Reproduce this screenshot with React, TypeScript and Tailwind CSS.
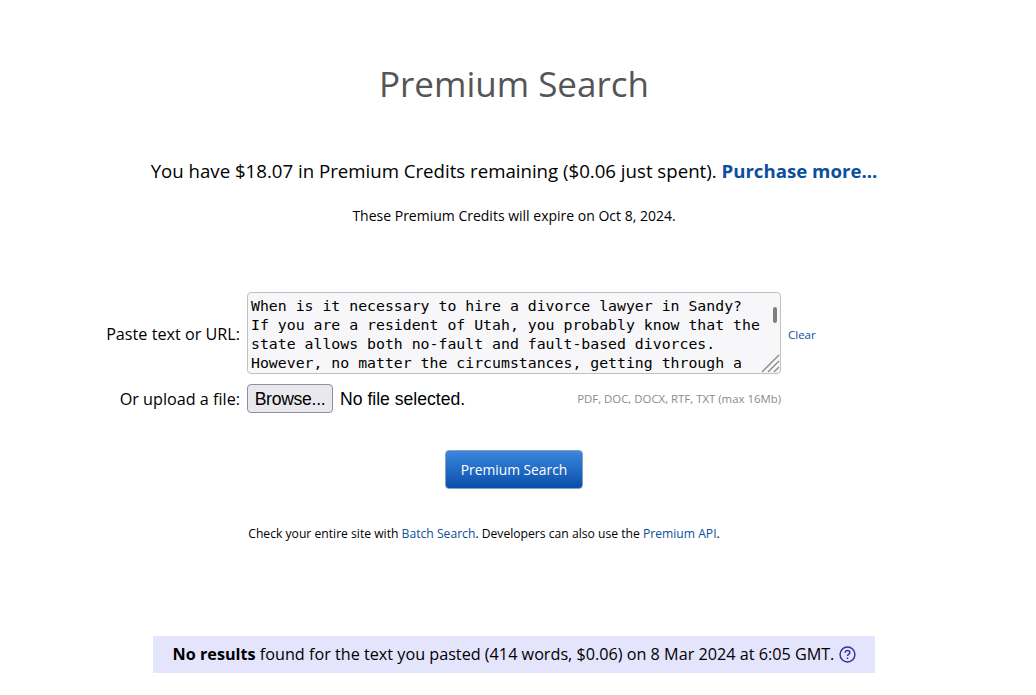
const sans = "font-['Open_Sans',sans-serif]";

const App = () => {
  return (
    <div className={`w-[1028px] h-[695px] overflow-hidden bg-white text-black ${sans}`}>
      <h1 className="pt-[60px] text-center text-[35px] leading-[48px] text-[#555555]">Premium Search</h1>

      <p className="mt-[50px] text-center text-[18.65px] leading-[25px]">
        You have $18.07 in Premium Credits remaining ($0.06 just spent).{" "}
        <a className="font-bold text-[#0b4f9e]">Purchase more...</a>
      </p>
      <p className="mt-[23px] text-center text-[14px] leading-[20px]">These Premium Credits will expire on Oct 8, 2024.</p>

      <div className="mt-[66px] flex items-center">
        <label className="w-[240px] pt-[1px] text-right text-[16.2px] leading-[22px]">Paste text or URL:</label>
        <div className="relative ml-[7px] h-[82px] w-[534px]">
          <textarea
            readOnly
            className="h-full w-full resize-none overflow-hidden rounded-[4px] border border-[#c0c0c0] bg-[#f7f7f9] pl-[3px] pr-[20px] pt-[3px] font-['DejaVu_Sans_Mono',monospace] text-[14.83px] leading-[19px] outline-none"
            defaultValue="When is it necessary to hire a divorce lawyer in Sandy?&#10;If you are a resident of Utah, you probably know that the state allows both no-fault and fault-based divorces.&#10;However, no matter the circumstances, getting through a divorce can be difficult."
          />
          <div className="absolute right-[4px] top-[15px] h-[16px] w-[4px] rounded-full bg-[#7f7f7f]" />
          <svg className="absolute bottom-[1px] right-[1px]" width="20" height="20" viewBox="0 0 20 20" stroke="#8a8a8a" strokeWidth="1.4" fill="none">
            <path d="M2 19 19 2M8 19 19 8M14 19l5-5" />
          </svg>
        </div>
        <a className="ml-[7px] pt-[3px] text-[11.5px] leading-[14px] text-[#0b4f9e]">Clear</a>
      </div>

      <div className="mt-[10px] flex h-[29px] w-[781px] items-center">
        <label className="w-[240px] text-right text-[16.2px] leading-[22px]">Or upload a file:</label>
        <button className="ml-[7px] h-[29px] w-[86px] rounded-[4px] border border-[#8f8f9d] bg-[#e9e9ed] font-['Liberation_Sans',sans-serif] text-[17.6px] leading-[20px] tracking-[-0.3px]">
          Browse...
        </button>
        <span className="ml-[7px] font-['Liberation_Sans',sans-serif] text-[17.6px] leading-[20px]">No file selected.</span>
        <span className="ml-auto text-[11.4px] leading-[14px] text-[#8a8a8a]">PDF, DOC, DOCX, RTF, TXT (max 16Mb)</span>
      </div>

      <div className="mt-[37px] flex justify-center">
        <button className="h-[39px] w-[138px] rounded-[4px] border border-[#8aa0b8] bg-gradient-to-b from-[#3b86e0] to-[#0450a8] pt-[2px] text-[13.8px] text-white">
          Premium Search
        </button>
      </div>

      <p className="mt-[36px] pr-[60px] text-center text-[12.15px] leading-[17px]">
        Check your entire site with <a className="text-[#0b4f9e]">Batch Search</a>. Developers can also use the{" "}
        <a className="text-[#0b4f9e]">Premium API</a>.
      </p>

      <div className="mt-[94px] flex justify-center">
        <div className="flex h-[37px] w-[722px] items-center justify-center bg-[#e4e4fd] pl-[1px] text-[16.2px]">
          <span>
            <b>No results</b> found for the text you pasted (414 words, $0.06) on 8 Mar 2024 at 6:05 GMT.
          </span>
          <svg className="ml-[5px]" width="17" height="17" viewBox="0 0 16 16" fill="none" stroke="#33339a" strokeWidth="1.4">
            <circle cx="8" cy="8" r="7" />
            <path d="M5.8 6.3C5.8 5 6.8 4.2 8 4.2s2.2.8 2.2 2c0 1.6-2.2 1.6-2.2 3.2" />
            <path d="M8 10.8v1.5" />
          </svg>
        </div>
      </div>
    </div>
  );
};

export default App;
